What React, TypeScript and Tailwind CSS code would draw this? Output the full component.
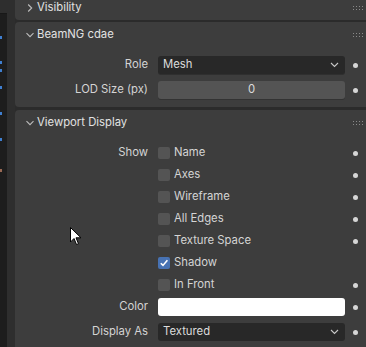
import { type FC, type ReactNode } from 'react';

const Chevron: FC<{ open?: boolean }> = ({ open }) => (
  <svg width="10" height="10" viewBox="0 0 10 10" className="shrink-0">
    {open ? (
      <path d="M1.5 3.2 L5 6.7 L8.5 3.2" fill="none" stroke="#bdbdbd" strokeWidth="1.1" />
    ) : (
      <path d="M3.2 1.5 L6.7 5 L3.2 8.5" fill="none" stroke="#bdbdbd" strokeWidth="1.1" />
    )}
  </svg>
);

const Grip: FC = () => (
  <svg width="10" height="4" viewBox="0 0 10 4" className="shrink-0">
    {[0, 3, 6, 9].map((x) =>
      [0, 3].map((y) => <rect key={`${x}-${y}`} x={x} y={y} width="1" height="1" fill="#8a8a8a" />)
    )}
  </svg>
);

const Dot: FC<{ show?: boolean }> = ({ show = true }) => (
  <div className="flex items-center justify-center">
    {show && <div className="w-[5px] h-[5px] rounded-full bg-[#d6d6d6]" />}
  </div>
);

const DropChevron: FC = () => (
  <svg width="9" height="6" viewBox="0 0 9 6">
    <path d="M1 1 L4.5 4.5 L8 1" fill="none" stroke="#c8c8c8" strokeWidth="1.1" />
  </svg>
);

const Row: FC<{ label?: string; h: string; dot?: boolean; children: ReactNode }> = ({ label, h, dot = true, children }) => (
  <div className={`grid grid-cols-[143px_187px_1fr] items-center ${h}`}>
    <div className="text-right pr-[10px] text-[#d4d4d4]">{label}</div>
    <div>{children}</div>
    <Dot show={dot} />
  </div>
);

const Check: FC<{ label: string; checked?: boolean; first?: boolean; dot?: boolean }> = ({ label, checked, first, dot = true }) => (
  <Row label={first ? 'Show' : ''} h="h-[22px]" dot={dot}>
    <div className="flex items-center gap-[4px]">
      {checked ? (
        <div className="w-[12px] h-[12px] rounded-[2px] bg-[#4772b3] flex items-center justify-center">
          <svg width="10" height="10" viewBox="0 0 10 10">
            <path d="M1.8 5.2 L4 7.4 L8.4 2.2" fill="none" stroke="#ffffff" strokeWidth="1.6" />
          </svg>
        </div>
      ) : (
        <div className="w-[12px] h-[12px] rounded-[2px] bg-[#545454]" />
      )}
      <span className="text-[#d4d4d4]">{label}</span>
    </div>
  </Row>
);

const Header: FC<{ title: string; open?: boolean; h: string; pb?: string }> = ({ title, open, h, pb = '' }) => (
  <div className={`flex items-center pl-[10px] pr-[3px] ${h} ${pb}`}>
    <Chevron open={open} />
    <span className="ml-[2px] text-[#e2e2e2]">{title}</span>
    <div className="ml-auto">
      <Grip />
    </div>
  </div>
);

const marks = [
  { top: 24, c: '#3f7fd0' },
  { top: 24, c: '#3f7fd0' },
  { top: 7, c: '#3f7fd0' },
  { top: 16, c: '#3f7fd0' },
  { top: 25, c: '#3f7fd0' },
  { top: 25, c: '#3f7fd0' },
  { top: 30, c: '#9a6a55' },
];

export default function App() {
  return (
    <div
      className="relative w-[366px] h-[347px] overflow-hidden flex bg-[#2b2b2b] text-[11.3px] leading-none"
      style={{ fontFamily: 'Inter, "Noto Sans", sans-serif' }}
    >
      <div className="w-[7px] flex flex-col">
        <div className="h-[14px] bg-[#2e2e2e] border-b border-[#181818]" />
        <div className="flex-1 bg-[#1d1d1d] flex flex-col">
          {marks.map((m, i) => (
            <div key={i} style={{ marginTop: m.top - 2 }} className="w-[2px] h-[3px]">
              <div className="w-[2px] h-[3px]" style={{ background: m.c }} />
            </div>
          ))}
        </div>
      </div>
      <div className="w-[8px] bg-[#2e2e2e]" />
      <div className="flex-1 flex flex-col">
        <div className="bg-[#3d3d3d] rounded-bl-[4px] h-[20px]">
          <Header title="Visibility" h="h-[20px]" pb="pb-[4px]" />
        </div>
        <div className="bg-[#3d3d3d] rounded-l-[4px] mt-[2px] h-[85px] flex flex-col">
          <Header title="BeamNG cdae" open h="h-[26px]" />
          <div className="mt-[8px] flex flex-col gap-[7px]">
            <Row label="Role" h="h-[18px]">
              <div className="h-[18px] rounded-[3px] bg-[#282828] flex items-center pl-[5px] pr-[6px] text-[#dcdcdc] shadow-[0_1px_0_#2f2f2f]">
                <span>Mesh</span>
                <span className="ml-auto">
                  <DropChevron />
                </span>
              </div>
            </Row>
            <Row label="LOD Size (px)" h="h-[18px]">
              <div className="h-[18px] rounded-[3px] bg-[#545454] flex items-center justify-center text-[#dcdcdc] shadow-[0_1px_0_#333333]">
                0
              </div>
            </Row>
          </div>
        </div>
        <div className="bg-[#3d3d3d] rounded-tl-[4px] mt-[3px] flex-1 flex flex-col">
          <Header title="Viewport Display" open h="h-[26px]" />
          <div className="mt-[6px] flex flex-col">
            <Check label="Name" first />
            <Check label="Axes" />
            <Check label="Wireframe" />
            <Check label="All Edges" />
            <Check label="Texture Space" />
            <Check label="Shadow" checked dot={false} />
            <Check label="In Front" />
            <Row label="Color" h="h-[22px]">
              <div className="h-[18px] rounded-[3px] bg-white" />
            </Row>
            <Row label="Display As" h="h-[28px]">
              <div className="h-[18px] rounded-[3px] bg-[#282828] flex items-center pl-[5px] pr-[6px] text-[#dcdcdc]">
                <span>Textured</span>
                <span className="ml-auto">
                  <DropChevron />
                </span>
              </div>
            </Row>
          </div>
        </div>
      </div>
      <svg width="13" height="19" viewBox="0 0 13 19" className="absolute left-[70px] top-[227px]">
        <path d="M0.5 0.5 L0.5 15 L4 11.5 L6.5 17.5 L8.5 16.7 L6 10.8 L11 10.8 Z" fill="#ffffff" stroke="#000000" strokeWidth="1" />
      </svg>
    </div>
  );
}
